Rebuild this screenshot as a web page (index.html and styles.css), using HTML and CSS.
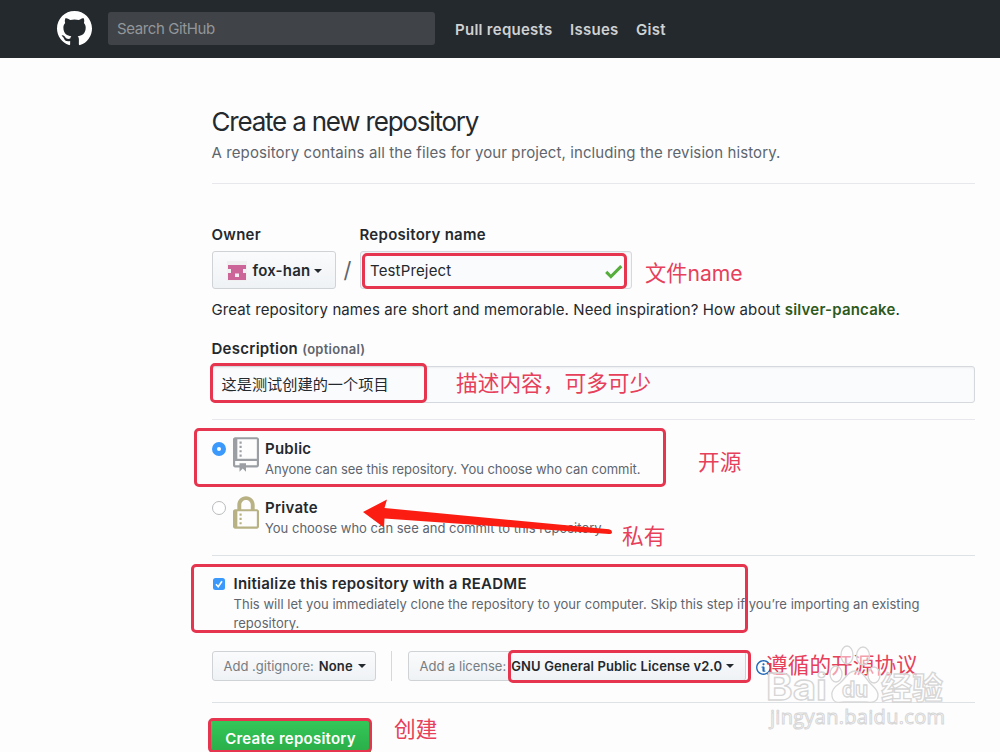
FILE: index.html
```
<!DOCTYPE html>
<html lang="en">
<head>
<meta charset="utf-8">
<title>Create a new repository</title>
<link rel="stylesheet" href="styles.css">
</head>
<body>
<header class="topbar">
  <svg class="logo" viewBox="0 0 16 16"><path d="M8 0C3.58 0 0 3.58 0 8c0 3.54 2.29 6.53 5.47 7.59.4.07.55-.17.55-.38 0-.19-.01-.82-.01-1.49-2.01.37-2.53-.49-2.69-.94-.09-.23-.48-.94-.82-1.13-.28-.15-.68-.52-.01-.53.63-.01 1.08.58 1.23.82.72 1.21 1.87.87 2.33.66.07-.52.28-.87.51-1.07-1.78-.2-3.64-.89-3.64-3.95 0-.87.31-1.59.82-2.15-.08-.2-.36-1.02.08-2.12 0 0 .67-.21 2.2.82.64-.18 1.32-.27 2-.27.68 0 1.36.09 2 .27 1.53-1.04 2.2-.82 2.2-.82.44 1.1.16 1.92.08 2.12.51.56.82 1.27.82 2.15 0 3.07-1.87 3.75-3.65 3.95.29.25.54.73.54 1.48 0 1.07-.01 1.93-.01 2.2 0 .21.15.46.55.38A8.013 8.013 0 0 0 16 8c0-4.42-3.58-8-8-8z"/></svg>
  <div class="search">Search GitHub</div>
  <nav class="nav"><a>Pull requests</a><a>Issues</a><a>Gist</a></nav>
</header>

<main class="page">
  <section class="intro">
    <h1 class="title">Create a new repository</h1>
    <p class="lead">A repository contains all the files for your project, including the revision history.</p>
  </section>

  <section class="fields">
    <div class="name-row">
      <div class="owner">
        <label class="label">Owner</label>
        <div class="btn owner-btn">
          <svg class="avatar" viewBox="0 0 20 20"><rect width="20" height="20" fill="#f0f0f0"/><path fill="#cc6699" d="M1 4h18v4h-3v4h3v7H1v-7h3V8H1z"/><path fill="#f8eef3" d="M8 12.500h4v3.500H8z"/></svg>
          <b class="owner-name">fox-han</b><i class="caret"></i>
        </div>
      </div>
      <div class="slash">/</div>
      <div class="repo">
        <label class="label">Repository name</label>
        <div class="input repo-input"><span>TestPreject</span>
          <svg class="check" viewBox="0 0 12 16"><path d="M12 5l-8 8-4-4 1.5-1.5L4 10l6.5-6.5L12 5z"/></svg>
        </div>
      </div>
    </div>
    <p class="help">Great repository names are short and memorable. Need inspiration? How about <b>silver-pancake</b>.</p>
    <label class="label desc-label">Description <small>(optional)</small></label>
    <div class="input desc-input">这是测试创建的一个项目</div>
  </section>

  <section class="visibility">
    <div class="choice">
      <i class="radio radio-on"></i>
      <svg class="kind kind-public" viewBox="0 0 12 16"><path d="M4 9H3V8h1v1zm0-3H3v1h1V6zm0-2H3v1h1V4zm0-2H3v1h1V2zm8-1v12c0 .55-.45 1-1 1H6v2l-1.5-1.5L3 16v-2H1c-.55 0-1-.45-1-1V1c0-.55.45-1 1-1h10c.55 0 1 .45 1 1zm-1 10H1v2h2v-1h3v1h5v-2zm0-10H2v9h9V1z"/></svg>
      <div><div class="choice-title">Public</div><div class="note note-public">Anyone can see this repository. You choose who can commit.</div></div>
    </div>
    <div class="choice">
      <i class="radio"></i>
      <svg class="kind kind-private" viewBox="0 0 12 16"><path d="M4 13H3v-1h1v1zm8-6v7c0 .55-.45 1-1 1H1c-.55 0-1-.45-1-1V7c0-.55.45-1 1-1h1V4c0-2.2 1.8-4 4-4s4 1.8 4 4v2h1c.55 0 1 .45 1 1zM3.8 6h4.41V4c0-1.22-.98-2.2-2.2-2.2-1.22 0-2.2.98-2.2 2.2v2H3.8zM11 7H2v7h9V7zM4 8H3v1h1V8zm0 2H3v1h1v-1z"/></svg>
      <div><div class="choice-title">Private</div><div class="note note-private">You choose who can see and commit to this repository.</div></div>
    </div>
  </section>

  <section class="setup">
    <div class="readme">
      <svg class="checkbox" viewBox="0 0 12 12"><rect width="12" height="12" rx="2.5" fill="#3b99fc"/><path d="M3 6.3l2.2 2.4L9 3.2" fill="none" stroke="#fff" stroke-width="1.6"/></svg>
      <div>
        <div class="choice-title readme-title">Initialize this repository with a README</div>
        <div class="note note-readme">This will let you immediately clone the repository to your computer. Skip this step if you’re importing an existing<br>repository.</div>
      </div>
    </div>
    <div class="selects">
      <div class="btn select ignore"><span>Add .gitignore:</span><b>None</b><i class="caret"></i></div>
      <i class="split"></i>
      <div class="btn select license"><span>Add a license:</span><b>GNU General Public License v2.0</b><i class="caret"></i></div>
      <svg class="info" viewBox="0 0 14 16"><path d="M6.3 5.69a.942.942 0 0 1-.28-.7c0-.28.09-.52.28-.7.19-.18.42-.28.7-.28.28 0 .52.09.7.28.18.19.28.42.28.7 0 .28-.09.52-.28.7a1 1 0 0 1-.7.3c-.28 0-.52-.11-.7-.3zM8 7.99c-.02-.25-.11-.48-.31-.69-.2-.19-.42-.3-.69-.31H6c-.27.02-.48.13-.69.31-.2.2-.3.44-.31.69h1v3c.02.27.11.5.31.69.2.2.42.31.69.31h1c.27 0 .48-.11.69-.31.2-.19.3-.42.31-.69H8V7.98v.01zM7 2.3c-3.14 0-5.7 2.54-5.7 5.68 0 3.14 2.56 5.7 5.7 5.7s5.7-2.55 5.7-5.7c0-3.15-2.56-5.69-5.7-5.69v.01zM7 .98c3.86 0 7 3.14 7 7s-3.14 7-7 7-7-3.12-7-7 3.14-7 7-7z"/></svg>
    </div>
  </section>

  <div class="submit">Create repository</div>
</main>

<div class="mark mark-name"></div>
<div class="mark mark-desc"></div>
<div class="mark mark-public"></div>
<div class="mark mark-readme"></div>
<div class="mark mark-license"></div>
<div class="mark mark-create"></div>
<svg class="arrow" viewBox="0 0 250 40"><path d="M0 15L24 2.500L21.500 11L246 32.300Q249 33 249 35Q249 37 246 37L21.500 21.500L21 30.500Z" fill="#fc1d12"/></svg>
<div class="remark remark-name">文件name</div>
<div class="remark remark-desc">描述内容，可多可少</div>
<div class="remark remark-public">开源</div>
<div class="remark remark-private">私有</div>
<div class="remark remark-license">遵循的开源协议</div>
<div class="remark remark-create">创建</div>

<svg class="watermark" viewBox="0 0 190 90">
  <g fill="#fff" fill-opacity=".5" stroke="#d6d6d6" stroke-width="1.300">
    <ellipse cx="87" cy="11" rx="6" ry="9"/><ellipse cx="103" cy="12" rx="6.500" ry="9"/>
    <ellipse cx="76" cy="30" rx="6" ry="8"/><ellipse cx="114" cy="31" rx="6" ry="8"/>
    <path d="M95 27c-7 0-9 7-15 12-6 4-9 8-8 13 1 7 6 7 12 6h22c6 1 12 0 12-7 0-6-5-8-9-13-4-5-7-11-14-11z"/>
    <g class="wm-brand"><text x="6" y="56" font-size="37" textLength="61" lengthAdjust="spacingAndGlyphs">Bai</text><text x="82" y="53" font-size="21" textLength="26">du</text><text x="121" y="55" font-size="31" textLength="62">经验</text></g>
    <text class="wm-url" x="10" y="80" font-size="20" textLength="175" stroke-width="1">jingyan.baidu.com</text>
  </g>
</svg>
</body>
</html>
```
FILE: styles.css
```
* { box-sizing: border-box; }
body { margin: 0; width: 1000px; height: 752px; overflow: hidden; position: relative; background: #fdfdfe; color: #24292e; font: 15px/20px Inter, "Noto Sans CJK SC", sans-serif; }
h1, p { margin: 0; }
b { font-weight: 600; letter-spacing: .2px; }

.topbar { display: flex; align-items: center; height: 58px; padding: 0 0 1px 57px; background: #24292e; }
.logo { width: 35px; height: 35px; fill: #fff; flex: none; }
.search { width: 327px; height: 33px; margin-left: 16px; padding-left: 9px; border-radius: 3px; background: #404448; color: #93969a; font-size: 15px; letter-spacing: -.4px; line-height: 33px; }
.nav { display: flex; gap: 17.500px; margin-left: 20px; padding-top: 2px; color: #cfd1d2; font-weight: 600; letter-spacing: .27px; }

.page { width: 763px; margin-left: 211.500px; }
.intro { height: 126px; padding-top: 46px; border-bottom: 1px solid #e6e8eb; }
.title { font-size: 26px; line-height: 36px; font-weight: 400; letter-spacing: -1.200px; white-space: nowrap; }
.lead { margin-top: 3px; color: #5f656d; letter-spacing: .1px; white-space: nowrap; }

.fields { height: 236px; padding-top: 41px; border-bottom: 1px solid #e6e8eb; }
.name-row { display: flex; align-items: flex-end; }
.label { display: block; font-weight: 600; letter-spacing: .27px; white-space: nowrap; }
.label small { color: #5f656d; font-size: 13px; }
.btn { display: flex; align-items: center; border: 1px solid #d0d3d6; border-radius: 3px; background: linear-gradient(#fafbfc, #eff2f5); white-space: nowrap; }
.owner-btn { width: 124px; height: 38px; margin-top: 6px; padding: 2px 0 0 14px; }
.avatar { width: 20px; height: 20px; margin-right: 6px; }
.caret { border: 4px solid transparent; border-top-color: #24292e; border-bottom: 0; margin-left: 4px; }
.slash { width: 24px; text-align: center; font-size: 22px; line-height: 38px; color: #5f656d; }
.input { display: flex; align-items: center; border: 1px solid #d5d8dc; border-radius: 3px; background: #fafbfd; box-shadow: inset 0 1px 2px rgba(27, 31, 35, .06); }
.repo-input { width: 272px; height: 38px; margin-top: 6px; padding: 2px 8px 0 9.500px; justify-content: space-between; letter-spacing: .15px; }
.check { width: 17.500px; height: 23px; fill: #55ad3b; }
.help { margin-top: 11px; letter-spacing: .1px; white-space: nowrap; }
.help b { color: #2d5a1b; }
.desc-label { margin-top: 19px; }
.desc-input { height: 37px; margin-top: 7px; padding: 1px 0 0 9px; font-size: 15.200px; }

.visibility { height: 136px; padding-top: 17px; border-bottom: 1px solid #dfe2e5; }
.choice { display: flex; height: 59px; }
.radio { flex: none; width: 14px; height: 14px; margin-top: 5px; border: 1px solid #b9bbbd; border-radius: 50%; background: #fff; }
.radio-on { border: 5px solid #3b99fc; }
.kind { flex: none; width: 26px; height: 35px; margin: 0 6px 0 7.500px; }
.kind-public { fill: #9b9fa3; }
.kind-private { fill: #b8b183; }
.choice-title { margin-top: 2px; font-weight: 600; letter-spacing: .25px; white-space: nowrap; }
.note { margin-top: 1px; color: #5f656d; font-size: 13px; line-height: 19px; white-space: nowrap; }
.note-public { letter-spacing: -.04px; }
.note-readme { letter-spacing: .033px; }

.setup { height: 147px; padding-top: 18px; border-bottom: 1px solid #dfe2e5; }
.readme { display: flex; height: 77px; }
.checkbox { width: 12px; height: 12px; margin: 4px 9px 0 1px; }
.readme-title { margin-top: 0; }
.selects { display: flex; align-items: center; }
.select { height: 30px; padding-left: 11px; font-size: 13px; }
.select b { letter-spacing: .13px; }
.select span { color: #767c82; margin-right: 5px; }
.ignore { width: 164px; }
.ignore .caret { margin-left: 5px; }
.split { width: 1px; height: 30px; margin: 0 16px 0 15px; background: #d5d8dc; }
.license { width: 338px; }
.info { width: 15px; height: 17px; margin: 3px 0 0 10px; fill: #2268b8; }

.submit { width: 160px; height: 40px; margin: 17px 0 0 -1px; border-radius: 3px; background: linear-gradient(#34c859, #28a745); color: #fff; font-weight: 600; letter-spacing: .24px; line-height: 38px; text-align: center; white-space: nowrap; }

.mark { position: absolute; border: 3px solid #e6364f; border-radius: 5px; }
.mark-name { left: 362px; top: 253px; width: 265px; height: 36px; }
.mark-desc { left: 210px; top: 363px; width: 217px; height: 40px; }
.mark-public { left: 194px; top: 428px; width: 472px; height: 59px; }
.mark-readme { left: 191px; top: 564px; width: 557px; height: 69px; }
.mark-license { left: 508px; top: 650px; width: 243px; height: 33px; }
.mark-create { left: 208px; top: 718px; width: 164px; height: 35px; }
.arrow { position: absolute; left: 363px; top: 497px; width: 250px; height: 40px; }
.remark { position: absolute; color: #e6405a; font-size: 21.700px; line-height: 30px; white-space: nowrap; }
.remark-name { left: 645px; top: 258px; font-size: 21.200px; }
.remark-desc { left: 456px; top: 368px; }
.remark-public { left: 698px; top: 447px; }
.remark-private { left: 622px; top: 521px; }
.remark-license { left: 766px; top: 650px; }
.remark-create { left: 394px; top: 714px; }
.watermark { position: absolute; left: 760px; top: 644px; width: 190px; height: 90px; }
.wm-brand { font-family: Inter, "Noto Sans CJK SC", sans-serif; font-weight: 700; }
.wm-url { font-family: "Open Sans", sans-serif; }
```
